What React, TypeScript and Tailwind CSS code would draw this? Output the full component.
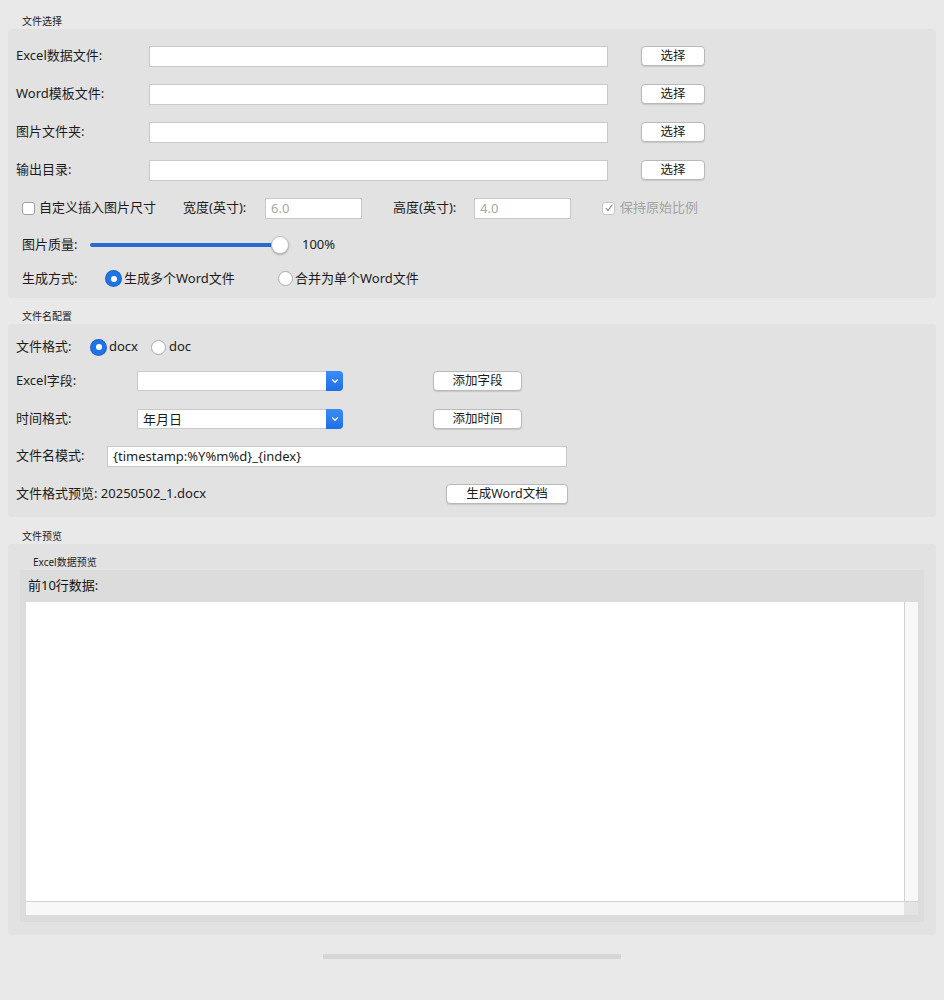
import { ChevronDown } from 'lucide-react'

const FONT = "font-['Noto_Sans','Noto_Sans_CJK_SC',sans-serif]"

function GroupTitle({ text, className = '' }: { text: string; className?: string }) {
  return (
    <div className={`h-4 flex items-center text-[10px] leading-none text-[#222] ${className}`}>{text}</div>
  )
}

function TextBox({ width, value, placeholder }: { width: string; value?: string; placeholder?: string }) {
  return (
    <div className={`${width} h-[21px] bg-white border border-[#c9c9c9] flex items-center px-[5px] text-[13px] leading-none`}>
      {value ? <span className="text-[#1c1c1c]">{value}</span> : <span className="text-[#a8a8a8]">{placeholder}</span>}
    </div>
  )
}

function Button({ label, width }: { label: string; width: string }) {
  return (
    <div className={`${width} h-[20px] bg-white border border-[#b9b9b9] rounded-[4px] shadow-[0_1px_1px_rgba(0,0,0,0.12)] flex items-center justify-center text-[12.5px] leading-none text-[#1c1c1c]`}>
      {label}
    </div>
  )
}

function Radio({ checked }: { checked: boolean }) {
  return checked ? (
    <div className="w-[15px] h-[15px] rounded-full bg-[#1f73e6] flex items-center justify-center shadow-[0_0_0_1px_#1b66cf]">
      <div className="w-[6px] h-[6px] rounded-full bg-white" />
    </div>
  ) : (
    <div className="w-[15px] h-[15px] rounded-full bg-white border border-[#a9a9a9]" />
  )
}

function Combo({ value }: { value?: string }) {
  return (
    <div className="w-[206px] h-[20px] flex">
      <div className="flex-1 bg-white border border-[#c9c9c9] border-r-0 flex items-center px-[5px] text-[13px] leading-none text-[#1c1c1c]">
        {value}
      </div>
      <div className="w-[17px] bg-gradient-to-b from-[#3b8cf8] to-[#1d6fe6] rounded-r-[4px] flex items-center justify-center">
        <ChevronDown className="w-[10px] h-[10px] text-white" strokeWidth={3} />
      </div>
    </div>
  )
}

function FileRow({ label }: { label: string }) {
  return (
    <div className="h-[38px] flex items-center">
      <div className="w-[133px] text-[13px] text-[#1c1c1c]">{label}</div>
      <TextBox width="w-[459px]" />
      <div className="ml-[33px]">
        <Button label="选择" width="w-[64px]" />
      </div>
    </div>
  )
}

export default function App() {
  return (
    <div className={`w-[944px] h-[1000px] bg-[#e9e9e9] px-2 ${FONT} text-[#1c1c1c]`}>
      <GroupTitle text="文件选择" className="pt-[13px] h-[29px] pl-[14px]" />
      <div className="bg-[#e2e2e2] rounded-[3px] pt-[8px] pb-[3px]">
        <div className="pl-2">
          <FileRow label="Excel数据文件:" />
          <FileRow label="Word模板文件:" />
          <FileRow label="图片文件夹:" />
          <FileRow label="输出目录:" />
        </div>
        <div className="pl-[14px]">
          <div className="h-[38px] flex items-center text-[13px]">
            <div className="w-[161px] flex items-center">
              <div className="w-[13px] h-[13px] bg-white border border-[#9f9f9f] rounded-[3px]" />
              <span className="ml-[4px]">自定义插入图片尺寸</span>
            </div>
            <div className="w-[82px]">宽度(英寸):</div>
            <TextBox width="w-[97px]" placeholder="6.0" />
            <div className="ml-[31px] w-[81px]">高度(英寸):</div>
            <TextBox width="w-[97px]" placeholder="4.0" />
            <div className="ml-[31px] flex items-center text-[#a3a3a3]">
              <div className="w-[13px] h-[13px] bg-white border border-[#c4c4c4] rounded-[3px] flex items-center justify-center">
                <svg viewBox="0 0 12 12" className="w-[10px] h-[10px]">
                  <path d="M2.5 6.5 L5 9 L9.5 2.5" fill="none" stroke="#8f8f8f" strokeWidth="1.4" strokeLinecap="round" strokeLinejoin="round" />
                </svg>
              </div>
              <span className="ml-[5px]">保持原始比例</span>
            </div>
          </div>
          <div className="h-[35px] flex items-center text-[13px]">
            <div className="w-[68px]">图片质量:</div>
            <div className="w-[200px] h-[20px] relative flex items-center">
              <div className="w-[192px] h-[4px] rounded-full bg-[#2869d2]" />
              <div className="absolute left-[181px] top-[1px] w-[18px] h-[18px] rounded-full bg-white border border-[#bdbdbd] shadow-[0_1px_2px_rgba(0,0,0,0.25)]" />
            </div>
            <span className="ml-[12px]">100%</span>
          </div>
          <div className="h-[33px] flex items-center text-[13px]">
            <div className="w-[84px]">生成方式:</div>
            <div className="w-[172px] flex items-center">
              <Radio checked />
              <span className="ml-[3px]">生成多个Word文件</span>
            </div>
            <div className="flex items-center">
              <Radio checked={false} />
              <span className="ml-[2px]">合并为单个Word文件</span>
            </div>
          </div>
        </div>
      </div>

      <GroupTitle text="文件名配置" className="mt-[10px] pl-[14px]" />
      <div className="bg-[#e2e2e2] rounded-[3px] pt-[9px] pb-[4px] pl-2 text-[13px]">
        <div className="h-[28px] flex items-center">
          <div className="w-[75px]">文件格式:</div>
          <Radio checked />
          <span className="ml-[3px]">docx</span>
          <div className="ml-[13px]">
            <Radio checked={false} />
          </div>
          <span className="ml-[3px]">doc</span>
        </div>
        <div className="h-[40px] flex items-center">
          <div className="w-[121px]">Excel字段:</div>
          <Combo />
          <div className="ml-[90px]">
            <Button label="添加字段" width="w-[89px]" />
          </div>
        </div>
        <div className="h-[36px] flex items-center">
          <div className="w-[121px]">时间格式:</div>
          <Combo value="年月日" />
          <div className="ml-[90px]">
            <Button label="添加时间" width="w-[89px]" />
          </div>
        </div>
        <div className="h-[38px] flex items-center">
          <div className="w-[91px]">文件名模式:</div>
          <TextBox width="w-[460px]" value="{timestamp:%Y%m%d}_{index}" />
        </div>
        <div className="h-[38px] flex items-center">
          <div className="w-[430px]">文件格式预览: 20250502_1.docx</div>
          <Button label="生成Word文档" width="w-[122px]" />
        </div>
      </div>

      <GroupTitle text="文件预览" className="mt-[11px] pl-[14px]" />
      <div className="bg-[#e2e2e2] rounded-[3px] pt-[10px] px-3 pb-[13px]">
        <GroupTitle text="Excel数据预览" className="pl-[13px]" />
        <div className="bg-[#dcdcdc] rounded-[2px] px-[6px] pb-[7px]">
          <div className="h-[32px] flex items-center pl-[2px] text-[13px] text-[#111]">前10行数据:</div>
          <div className="h-[313px] bg-white flex flex-col">
            <div className="flex-1 flex">
              <div className="flex-1" />
              <div className="w-[14px] bg-[#f8f8f8] border-l border-[#d2d2d2]" />
            </div>
            <div className="h-[14px] flex border-t border-[#d2d2d2]">
              <div className="flex-1 bg-[#f8f8f8]" />
              <div className="w-[14px] bg-[#e4e4e4]" />
            </div>
          </div>
        </div>
      </div>

      <div className="mt-[19px] flex justify-center">
        <div className="w-[298px] h-[5px] bg-[#d6d6d6]" />
      </div>
    </div>
  )
}
